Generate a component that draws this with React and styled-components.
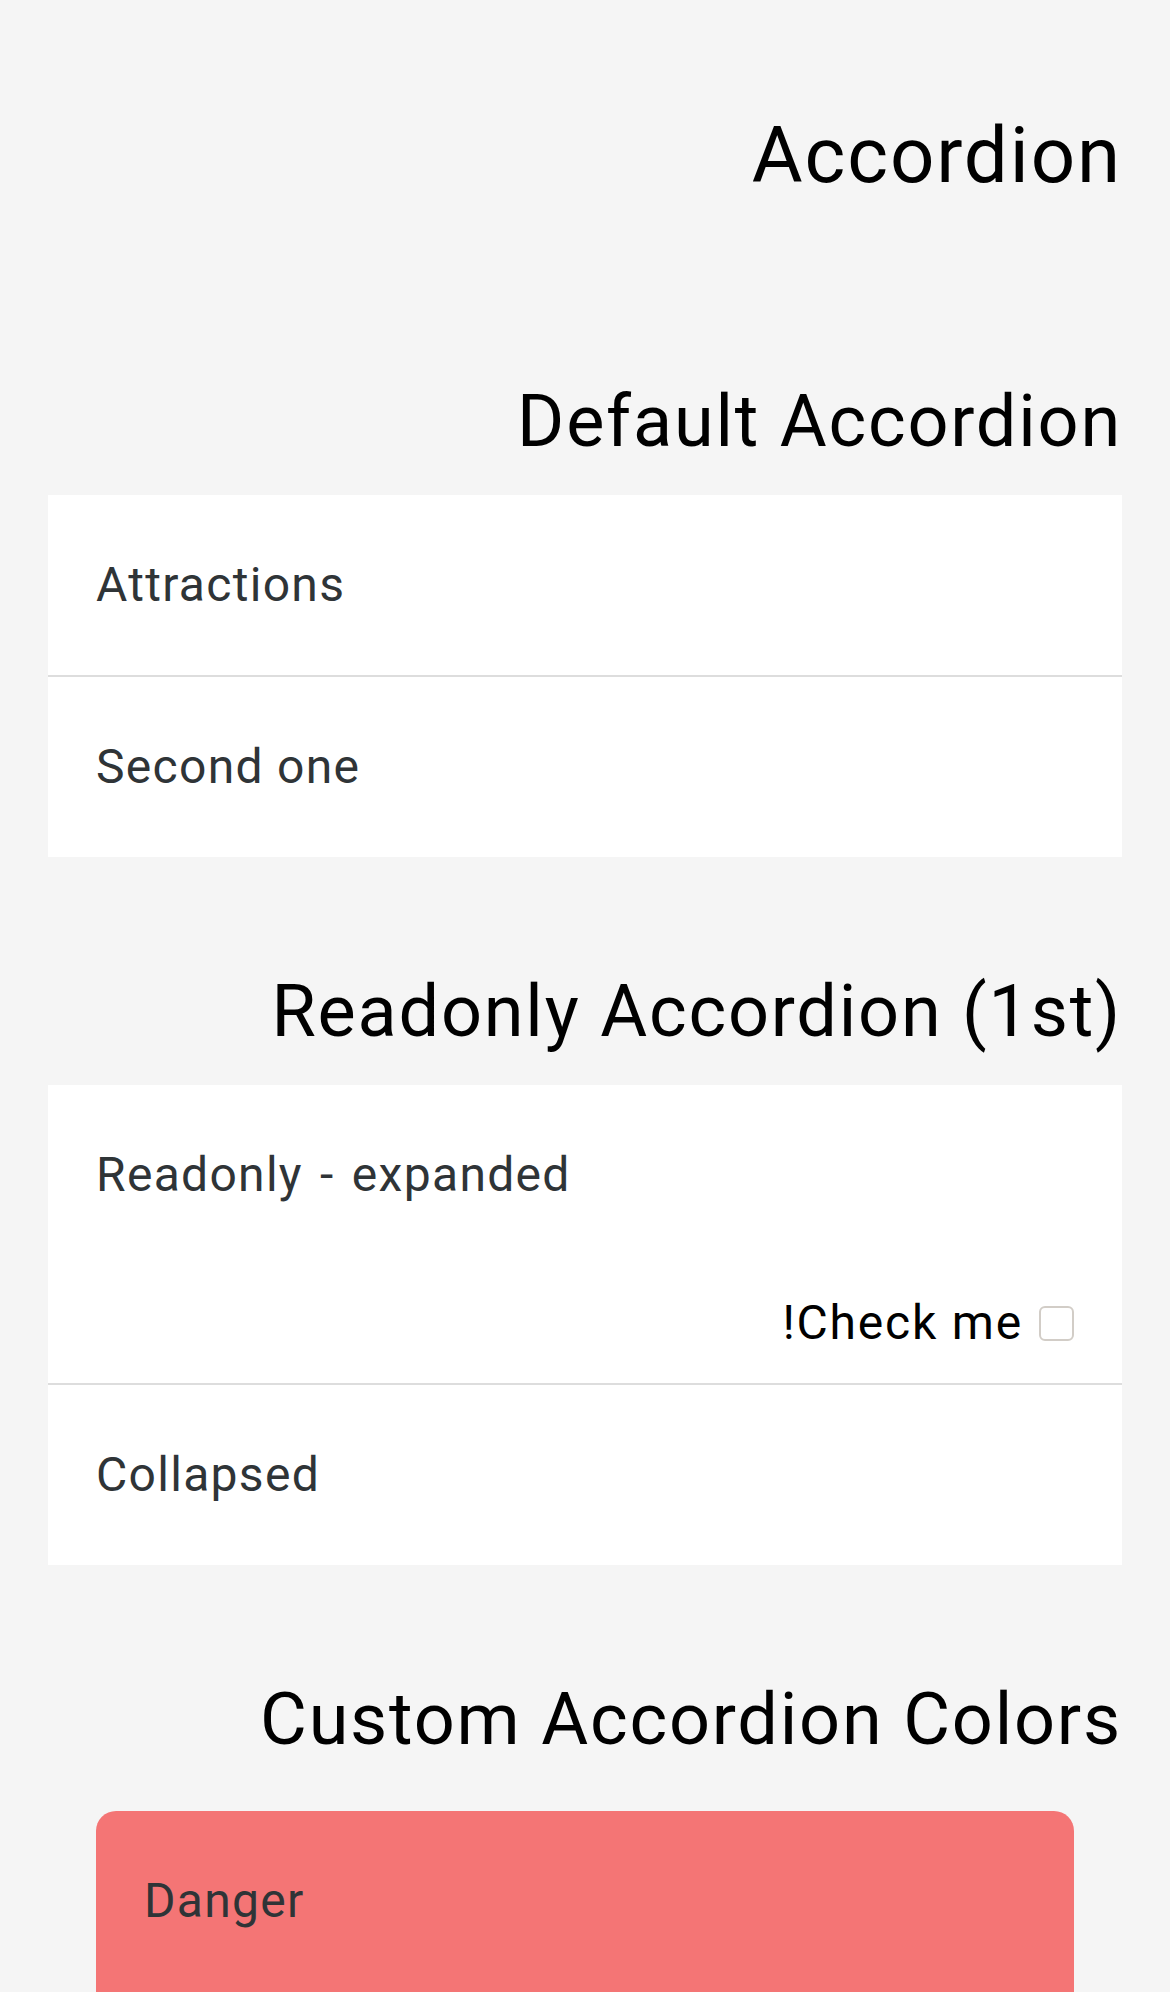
import React from 'react';
import styled, { createGlobalStyle } from 'styled-components';

const GlobalStyle = createGlobalStyle`
  body {
    margin: 0;
    background-color: #f5f5f5;
    font-family: Roboto, "Liberation Sans", sans-serif;
  }
`;

const Page = styled.main`
  padding: 109px 48px 0;
  box-sizing: border-box;
`;

const Title = styled.h1`
  margin: 0 0 176px;
  font-size: 78px;
  line-height: 94px;
  font-weight: 400;
  letter-spacing: 1.9px;
  text-align: right;
  color: #000;
`;

const Section = styled.section`
  & + & {
    margin-top: 112px;
  }
`;

const SectionTitle = styled.h2`
  margin: 0 0 30px;
  font-size: 72px;
  line-height: 86px;
  font-weight: 400;
  letter-spacing: 1.8px;
  text-align: right;
  color: #000;
`;

// margins collapse with the heading's, so the inset one takes 48px on top
const Accordion = styled.div`
  background-color: ${(p) => p.$color || '#fff'};
  border-radius: ${(p) => (p.$rounded ? '20px' : '0')};
  margin: ${(p) => (p.$inset ? '48px 48px 0' : '0')};
  overflow: hidden;
`;

const Item = styled.div`
  & + & {
    border-top: 2px solid #dddddd;
  }
`;

const ItemHeader = styled.div`
  padding: 60px 48px;
  font-size: 48px;
  line-height: 60px;
  letter-spacing: 1.3px;
  word-spacing: ${(p) => p.$wide ? '4px' : '0'};
  color: #2f3437;
`;

const ItemContent = styled.div`
  display: flex;
  justify-content: flex-end;
  align-items: center;
  gap: 16px;
  min-height: 60px;
  padding: 28px 48px 30px;
`;

const CheckLabel = styled.label`
  font-size: 48px;
  line-height: 60px;
  letter-spacing: 1.8px;
  color: #000;
`;

const Checkbox = styled.input`
  appearance: none;
  width: 35px;
  height: 35px;
  margin: 0;
  border: 2px solid #d2cdc7;
  border-radius: 6px;
  background: #fff;
  box-sizing: border-box;
`;

const App = () => {
  return (
    <>
      <GlobalStyle />
      <Page>
        <Title>Accordion</Title>

        <Section>
          <SectionTitle>Default Accordion</SectionTitle>
          <Accordion>
            <Item>
              <ItemHeader>Attractions</ItemHeader>
            </Item>
            <Item>
              <ItemHeader>Second one</ItemHeader>
            </Item>
          </Accordion>
        </Section>

        <Section>
          <SectionTitle>Readonly Accordion (1st)</SectionTitle>
          <Accordion>
            <Item>
              <ItemHeader $wide>Readonly - expanded</ItemHeader>
              <ItemContent>
                <CheckLabel htmlFor="check-me">!Check me</CheckLabel>
                <Checkbox id="check-me" type="checkbox" />
              </ItemContent>
            </Item>
            <Item>
              <ItemHeader>Collapsed</ItemHeader>
            </Item>
          </Accordion>
        </Section>

        <Section>
          <SectionTitle>Custom Accordion Colors</SectionTitle>
          <Accordion $color="#f47575" $rounded $inset>
            <Item>
              <ItemHeader>Danger</ItemHeader>
              <ItemContent />
            </Item>
          </Accordion>
        </Section>
      </Page>
    </>
  );
};

export default App;
